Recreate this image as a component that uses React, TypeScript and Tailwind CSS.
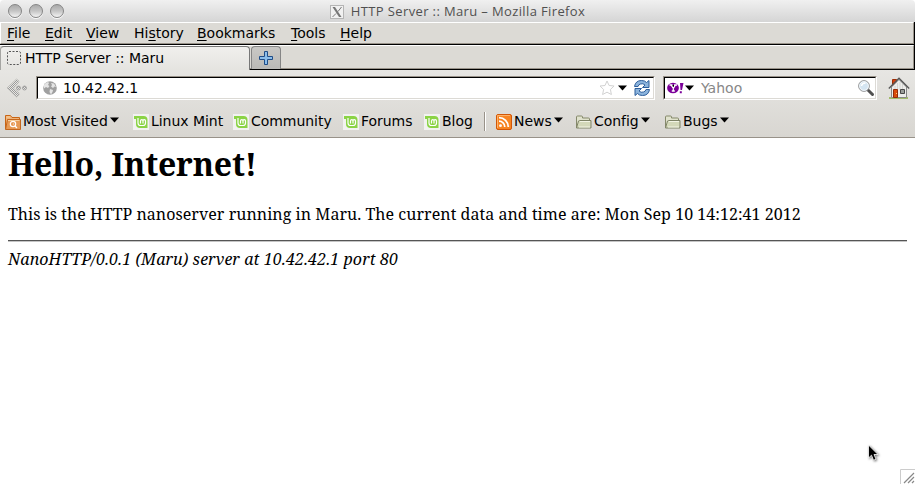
import React from "react";

const Caret = () => (
  <svg width="9" height="6" viewBox="0 0 9 6" className="shrink-0"><path d="M0 .5h9L4.500 5.500z" fill="#000" /></svg>
);

const Mint = () => (
  <svg width="16" height="16" viewBox="0 0 16 16" className="shrink-0">
    <rect width="16" height="16" fill="#f2f2f0" />
    <path d="M1 2h9.500Q14.500 2 14.500 6v8H7Q3 14 3 10V5H1z" fill="#8bd346" />
    <path d="M5 4v5q0 2.500 2.500 2.500h2.500q2.500 0 2.500-2.500V7q0-1.300-1.300-1.300T10 7v2.500M10 7q0-1.300-1.200-1.300T7.500 7v2.500" fill="none" stroke="#fff" strokeWidth="1.200" />
  </svg>
);

const Folder = () => (
  <svg width="17" height="16" viewBox="0 0 17 16" className="shrink-0">
    <path d="M1.500 14V3q0-1 1-1h4q1 0 1 1v1h6q1 0 1 1v2" fill="#e0e2cd" stroke="#85896b" />
    <path d="M4.500 6.500h11.500v7.500H1.500l2-7z" fill="#d3d8b9" stroke="#7e8366" />
    <path d="M5 7.500h10M4 13h11" stroke="#f2f4e5" />
  </svg>
);

const VisitedFolder = () => (
  <svg width="16" height="16" viewBox="0 0 16 16" className="shrink-0">
    <path d="M.5 15V1.500h5l1.500 2h7.500v3" fill="#efb47a" stroke="#c86414" />
    <path d="M2.500 5.500h13v10H.5z" fill="#e69a55" stroke="#c4661c" />
    <circle cx="8" cy="10" r="2.700" fill="#e79b57" stroke="#fff" strokeWidth="1.200" />
    <path d="M10 12l2 2M8 10h.5" stroke="#fff" strokeWidth="1.300" />
    <path d="M1.500 3H5M3 6.500h11.500" stroke="#f6cf9e" />
  </svg>
);

const Rss = () => (
  <svg width="16" height="16" viewBox="0 0 16 16" className="shrink-0">
    <rect x=".5" y=".5" width="15" height="15" rx="1.500" fill="#f78422" stroke="#d25708" />
    <path d="M1.500 14V1.500H14" fill="none" stroke="#ffb268" />
    <circle cx="4.500" cy="11.700" r="1.400" fill="#fff" />
    <path d="M3 7.200a5.800 5.800 0 0 1 5.800 5.800M3 3.700a9.300 9.300 0 0 1 9.300 9.300" fill="none" stroke="#fff" strokeWidth="1.700" />
  </svg>
);

const Light = () => (
  <span className="h-[14px] w-[14px] rounded-full border border-[#858585] bg-linear-to-b from-[#aaa] via-[#c5c5c5] to-[#f4f4f4] shadow-[0_1px_0_#fafafa]" />
);

const menus: [string, string, string, string][] = [
  ["", "F", "ile", "w-[38px]"], ["", "E", "dit", "w-[41px]"], ["", "V", "iew", "w-[48px]"], ["Hi", "s", "tory", "w-[63px]"],
  ["", "B", "ookmarks", "w-[94px]"], ["", "T", "ools", "w-[49px]"], ["", "H", "elp", "w-[50px]"],
];

const Mark = ({ icon, label, box, menu }: { icon: React.ReactNode; label: string; box: string; menu?: boolean }) => (
  <div className={"flex shrink-0 items-center " + box}>
    {icon}<span className="ml-[2px] pb-[2px] leading-4 tracking-[-0.04px]">{label}</span>{menu && <span className="ml-[2px] flex pb-[3px]"><Caret /></span>}
  </div>
);

export default function App() {
  return (
    <div className="flex h-[484px] w-[915px] flex-col overflow-hidden bg-white font-['DejaVu_Sans',sans-serif] text-[14px] text-black">
      <header className="relative flex h-[22px] shrink-0 items-center justify-center rounded-t-[4px] bg-linear-to-b from-[#f0f0f0] to-[#d5d5d5]">
        <div className="absolute left-[8px] top-[4px] flex gap-[7px]"><Light /><Light /><Light /></div>
        <div className="flex items-center gap-[7px]">
          <svg width="14" height="14" viewBox="0 0 14 14" className="mt-[2px]">
            <rect x=".5" y=".5" width="13" height="13" fill="#f1f1f1" stroke="#b5b5b5" />
            <path d="M2.500 2h2.500l6.500 10H9z" fill="#777" /><path d="M11.500 2L8 6.500M6 8.500L2.500 12" stroke="#777" />
          </svg>
          <span className="whitespace-nowrap font-['Open_Sans',sans-serif] text-[13px] leading-5 tracking-[0.37px] text-[#505050]">HTTP Server :: Maru – Mozilla Firefox</span>
        </div>
      </header>

      <nav className="flex h-[23px] shrink-0 border-b border-r border-black bg-[#dcdad5]">
        <div className="flex w-full border-b border-l border-r border-t border-b-[#989289] border-l-white border-r-[#989289] border-t-white pl-[6px]">
          {menus.map(([a, u, b, w]) => (
            <span key={u} className={"shrink-0 leading-[20px] " + w}>{a}<span className="underline underline-offset-2">{u}</span>{b}</span>
          ))}
        </div>
      </nav>

      <div className="flex h-[25px] shrink-0 border-b border-r border-black bg-[#dcdad5]">
        <div className="flex w-full border-b border-r border-t border-b-[#989289] border-r-[#989289] border-t-white">
          <div className="-mb-[2px] flex h-[24px] w-[250px] shrink-0 items-center rounded-t-[4px] border border-b-0 border-l-[#a5a5a2] border-r-[#777] border-t-[#777] bg-linear-to-b from-[#f0efed] to-[#e5e4e0] pl-[6px]">
            <svg width="14" height="14" viewBox="0 0 14 14" className="-mt-px shrink-0"><rect x=".5" y=".5" width="13" height="13" rx="1.500" fill="none" stroke="#555" strokeDasharray="2 1.500" /></svg>
            <span className="ml-[4px] pb-[2px] leading-4 tracking-[-0.04px]">HTTP Server :: Maru</span>
          </div>
          <div className="ml-px flex h-[23px] w-[30px] shrink-0 items-center justify-center rounded-t-[4px] border border-b-0 border-[#858585] bg-linear-to-b from-[#c9c8c5] to-[#bab9b6]">
            <svg width="14" height="14" viewBox="0 0 14 14"><path d="M5.500.5h3v5h5v3h-5v5h-3v-5h-5v-3h5z" fill="#8bbdea" stroke="#204d87" /></svg>
          </div>
        </div>
      </div>

      <div className="h-[68px] shrink-0 border-b border-[#989289] bg-linear-to-b from-[#e7e6e3] to-[#d8d6d1]">
        <div className="flex h-[36px] items-center">
          <svg width="22" height="20" viewBox="0 0 22 20" className="ml-[6px] shrink-0">
            <defs><pattern id="stipple" width="2" height="2" patternUnits="userSpaceOnUse"><rect width="2" height="2" fill="#e8e7e4" /><path d="M0 0h1v1H0zM1 1h1v1H1z" fill="#999" /></pattern></defs>
            <path d="M10.500 1l2.500 2v1L7.500 10l5.500 5v2l-2.500 2L1 10z" fill="url(#stipple)" stroke="#b5b5b2" strokeWidth=".6" />
            <circle cx="12.500" cy="10" r="2" fill="url(#stipple)" stroke="#999" strokeWidth=".8" /><circle cx="18.500" cy="10" r="2" fill="url(#stipple)" stroke="#999" strokeWidth=".8" />
          </svg>
          <div className="ml-[8px] flex h-[24px] w-[619px] shrink-0 border border-b-white border-l-[#989289] border-r-white border-t-[#989289]">
            <div className="flex w-full items-center border border-b-[#dcdad5] border-l-black border-r-[#dcdad5] border-t-black bg-white pl-[5px]">
              <svg width="14" height="14" viewBox="0 0 14 14"><circle cx="7" cy="7" r="6.800" fill="#a0a0a0" /><path d="M2 2.500L5 1l1 1-1 2 1.500 1L5 7 3 6 1 7.500 1 4zM8 2l3 .5L13 6l-1.500-.5L10 7 8 5.500 9 4zM7 8l3 1-.5 2L8 13.500 6.500 11z" fill="#e5e5e5" /></svg>
              <span className="ml-[6px] leading-5 tracking-[-0.05px]">10.42.42.1</span>
              <svg width="16" height="16" viewBox="0 0 16 16" className="ml-auto"><path d="M8 1l2.100 4.500 5 .5-3.700 3.500 1 5L8 12.200 3.600 14.500l1-5L1 6l5-.5z" fill="#fff" stroke="#d2d2d2" strokeLinejoin="round" /></svg>
              <span className="ml-[3px] -mt-px"><Caret /></span>
              <svg width="18" height="18" viewBox="0 0 18 18" className="ml-[6px] mr-[2px]">
                <g fill="#8bb3dc" stroke="#2d5e9b" strokeLinejoin="round"><path d="M1.500 7.500q1-6 7-6 3.500 0 5 2l2.500-2v7H9.500L12 6Q10 4 7.500 5 5.500 5.500 5 7.500z" /><path d="M16.500 10.500q-1 6-7 6-3.500 0-5-2L2 16.500v-7h6.500L6 12q2 2 4.500 1 2-.5 2.500-2.500z" /></g>
              </svg>
            </div>
          </div>
          <div className="ml-[8px] flex h-[24px] w-[214px] shrink-0 border border-b-white border-l-[#989289] border-r-white border-t-[#989289]">
            <div className="flex w-full items-center border border-b-[#dcdad5] border-l-black border-r-[#dcdad5] border-t-black bg-white pl-[2px]">
              <svg width="17" height="12" viewBox="0 0 17 12"><ellipse cx="6" cy="6" rx="5.900" ry="5.200" fill="#7b0099" /><path d="M2.500 3h3M7 3h3M4 3l2.300 3.300L8.500 3M6.300 6v3M4.800 9h3" stroke="#fff" strokeWidth="1.300" /><path d="M13 1h3.500L15 8h-1.500zM12.800 9.200h2v2h-2z" fill="#7b0099" /></svg>
              <span className="ml-px -mt-px"><Caret /></span>
              <span className="ml-[7px] leading-5 text-[#888]">Yahoo</span>
              <svg width="18" height="18" viewBox="0 0 18 18" className="ml-auto"><path d="M10.500 10.500l5 5" stroke="#505050" strokeWidth="3" strokeLinecap="round" /><circle cx="7" cy="7" r="5.400" fill="#d4e5f2" stroke="#999" /><circle cx="7" cy="7" r="4.300" fill="none" stroke="#f3f7fa" /><path d="M4.500 7q.5-3 4-3" fill="none" stroke="#fff" strokeWidth="1.500" /></svg>
            </div>
          </div>
          <svg width="22" height="22" viewBox="0 0 22 22" className="ml-[11px] -mt-px shrink-0">
            <path d="M1 21h19" stroke="#8caf45" strokeWidth="1.500" /><path d="M4.500 2.500h4v6h-4z" fill="#d5400d" stroke="#9d2c05" />
            <path d="M3.500 10L11 2.500 18.500 10v10.500h-15z" fill="#ededeb" stroke="#888" /><path d="M7 9v4M9.500 6v7M12 5v8M14.500 7v6" stroke="#d5d5d2" />
            <path d="M.8 11.500L11 1.200l10.200 10.300" fill="none" stroke="#555" strokeWidth="1.300" /><path d="M5.500 12.500h4v8h-4z" fill="#db4b0b" stroke="#932d09" />
            <path d="M12.500 12.500h4v4h-4z" fill="#9a9d9a" stroke="#484848" /><path d="M8 16.500h1" stroke="#ffd06f" />
          </svg>
        </div>
        <div className="flex h-[31px] items-center pl-[5px]">
          <Mark icon={<VisitedFolder />} label="Most Visited" box="w-[128px]" menu />
          <Mark icon={<Mint />} label="Linux Mint" box="w-[100px]" />
          <Mark icon={<Mint />} label="Community" box="w-[110px]" />
          <Mark icon={<Mint />} label="Forums" box="w-[81px]" />
          <Mark icon={<Mint />} label="Blog" box="w-[60px]" />
          <div className="mr-[10px] h-[19px] w-[2px] shrink-0 border-l border-r border-l-[#989289] border-r-white" />
          <Mark icon={<Rss />} label="News" box="w-[79px]" menu />
          <Mark icon={<Folder />} label="Config" box="w-[89px]" menu />
          <Mark icon={<Folder />} label="Bugs" box="w-[75px]" menu />
        </div>
      </div>

      <main className="relative flex flex-1 flex-col px-[8px] font-['Noto_Serif','Droid_Serif','DejaVu_Serif_Condensed','DejaVu_Serif',serif]">
        <h1 className="mt-[4px] whitespace-nowrap text-[32px] font-bold leading-[44px] tracking-[-0.16px]">Hello, Internet!</h1>
        <p className="mt-[17px] whitespace-nowrap text-[16px] leading-[22px] tracking-[0.048px]">This is the HTTP nanoserver running in Maru. The current data and time are: Mon Sep 10 14:12:41 2012</p>
        <hr className="mt-[15px] h-[2px] border-0 border-b border-t border-b-[#c5c5c5] border-t-[#555]" />
        <address className="mt-[6px] whitespace-nowrap text-[16px] italic leading-[22px] tracking-[0.09px]">NanoHTTP/0.0.1 (Maru) server at 10.42.42.1 port 80</address>
        <svg width="13" height="20" viewBox="0 0 13 20" className="absolute left-[867px] top-[306px] drop-shadow-[1px_1px_1px_#0008]"><path d="M1.500 1v13l3-2.800 2 5 2.500-1-2-4.700h4z" fill="#000" stroke="#fff" strokeWidth=".8" /></svg>
        <svg width="15" height="15" viewBox="0 0 15 15" className="absolute bottom-0 right-0"><path d="M.5 15V.5H15" fill="#fff" stroke="#ccc" /><path d="M4 14L14 4M8 14l6-6M12 14l2-2" stroke="#888" strokeWidth="1.200" /></svg>
      </main>
    </div>
  );
}
